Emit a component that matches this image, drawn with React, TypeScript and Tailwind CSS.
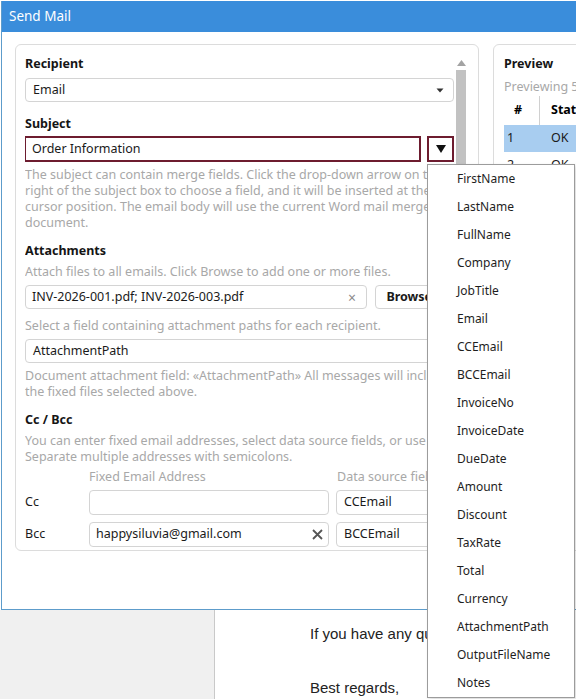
import * as React from 'react'

const fields = [
	'FirstName',
	'LastName',
	'FullName',
	'Company',
	'JobTitle',
	'Email',
	'CCEmail',
	'BCCEmail',
	'InvoiceNo',
	'InvoiceDate',
	'DueDate',
	'Amount',
	'Discount',
	'TaxRate',
	'Total',
	'Currency',
	'AttachmentPath',
	'OutputFileName',
	'Notes',
]

function Caret() {
	return (
		<svg width="8" height="5" viewBox="0 0 8 5" className="shrink-0">
			<path d="M0.5 0.5 L7.5 0.5 L4 4.5 Z" fill="#333" />
		</svg>
	)
}

function Label({ children }: { children: React.ReactNode }) {
	return (
		<div className="h-[18px] pt-[1px] text-[12.5px] leading-[18px] font-bold text-[#151515]">
			{children}
		</div>
	)
}

function Help({ children, className = '' }: { children: React.ReactNode; className?: string }) {
	return (
		<div className={`text-[12.5px] leading-[16px] text-[#a8a8a8] whitespace-nowrap ${className}`}>
			{children}
		</div>
	)
}

function Select({ value, className = '' }: { value: string; className?: string }) {
	return (
		<div
			className={`flex h-[24px] items-center justify-between rounded-[4px] border border-[#d4d4d4] bg-white pl-[7px] pr-[9px] text-[12.5px] text-[#1a1a1a] ${className}`}
		>
			<span>{value}</span>
			<Caret />
		</div>
	)
}

function RecipientPanel() {
	return (
		<div className="flex h-[507px] w-[464px] shrink-0 rounded-[6px] border border-[#dcdcdc] bg-white pl-[9px] pr-[11px] pt-[9px]">
			<div className="h-[493px] w-[430px] overflow-hidden">
				<Label>Recipient</Label>
				<Select value="Email" className="mt-[6px] w-[429px]" />

				<div className="mt-[12px]">
					<Label>Subject</Label>
				</div>
				<div className="mt-[4px] flex gap-[6px]">
					<div className="-ml-[1px] flex h-[26px] w-[397px] items-center border-2 border-[#6d1c2f] pl-[6px] pt-[1px] text-[12.5px] text-[#1a1a1a]">
						Order Information
					</div>
					<div className="flex h-[26px] w-[27px] items-center justify-center border-2 border-[#6d1c2f]">
						<svg width="10" height="8" viewBox="0 0 10 8">
							<path d="M0 0 L10 0 L5 8 Z" fill="#111" />
						</svg>
					</div>
				</div>
				<Help className="mt-[5px] -mb-[1px]">
					<div>The subject can contain merge fields. Click the drop-down arrow on the</div>
					<div>right of the subject box to choose a field, and it will be inserted at the</div>
					<div>cursor position. The email body will use the current Word mail merge</div>
					<div>document.</div>
				</Help>

				<div className="mt-[11px]">
					<Label>Attachments</Label>
				</div>
				<Help className="mt-[5px]">Attach files to all emails. Click Browse to add one or more files.</Help>
				<div className="mt-[5px] flex gap-[8px]">
					<div className="flex h-[24px] w-[342px] items-center justify-between rounded-[4px] border border-[#d4d4d4] pl-[6px] pr-[10px] text-[12.5px] text-[#1a1a1a]">
						<span>INV-2026-001.pdf; INV-2026-003.pdf</span>
						<span className="text-[14px] text-[#8a8a8a]">×</span>
					</div>
					<div className="flex h-[24px] w-[79px] items-center justify-center rounded-[4px] border border-[#d4d4d4] text-[12.5px] font-bold text-[#1a1a1a]">
						Browse...
					</div>
				</div>
				<Help className="mt-[9px]">Select a field containing attachment paths for each recipient.</Help>
				<Select value="AttachmentPath" className="mt-[5px] w-[429px]" />
				<Help className="mt-[5px] -mb-[1px]">
					<div>Document attachment field: «AttachmentPath» All messages will include</div>
					<div>the fixed files selected above.</div>
				</Help>

				<div className="mt-[11px]">
					<Label>Cc / Bcc</Label>
				</div>
				<Help className="mt-[5px] -mb-[1px]">
					<div>You can enter fixed email addresses, select data source fields, or use both.</div>
					<div>Separate multiple addresses with semicolons.</div>
				</Help>
				<div className="mt-[5px] grid grid-cols-[57px_240px_1fr] gap-x-[7px] text-[12.5px]">
					<div />
					<div className="leading-[16px] text-[#a8a8a8]">Fixed Email Address</div>
					<div className="whitespace-nowrap pl-[1px] leading-[16px] text-[#a8a8a8]">Data source field</div>
				</div>
				<div className="mt-[5px] grid grid-cols-[57px_240px_1fr] items-center gap-x-[7px] text-[12.5px] text-[#1a1a1a]">
					<div>Cc</div>
					<div className="h-[25px] rounded-[4px] border border-[#d4d4d4]" />
					<Select value="CCEmail" className="h-[25px]" />
				</div>
				<div className="mt-[7px] grid grid-cols-[57px_240px_1fr] items-center gap-x-[7px] text-[12.5px] text-[#1a1a1a]">
					<div>Bcc</div>
					<div className="flex h-[25px] items-center justify-between rounded-[4px] border border-[#d4d4d4] pl-[6px] pr-[5px]">
						<span>happysiluvia@gmail.com</span>
						<svg width="11" height="11" viewBox="0 0 11 11">
							<path d="M1 1 L10 10 M10 1 L1 10" stroke="#555" strokeWidth="1.8" />
						</svg>
					</div>
					<Select value="BCCEmail" className="h-[25px]" />
				</div>
			</div>
			<div className="ml-[1px] flex w-[10px] flex-col items-center pt-[6px]">
				<svg width="9" height="6" viewBox="0 0 9 6">
					<path d="M0 6 L4.5 0 L9 6 Z" fill="#a3a3a3" />
				</svg>
				<div className="mt-[4px] h-[470px] w-[10px] bg-[#c2c2c2]" />
			</div>
		</div>
	)
}

function PreviewPanel() {
	return (
		<div className="h-[507px] w-[300px] shrink-0 rounded-[6px] border border-[#dcdcdc] bg-white pl-[10px] pt-[9px]">
			<Label>Preview</Label>
			<div className="mt-[7px] whitespace-nowrap text-[12.5px] leading-[16px] text-[#a8a8a8]">
				Previewing 5 recipients
			</div>
			<div className="mt-[1px] flex h-[29px] items-center text-[12.5px]">
				<div className="flex h-full w-[36px] items-center border-r border-[#d0d0d0] pl-[10px] font-bold">#</div>
				<div className="whitespace-nowrap pl-[11px] font-bold">Status</div>
			</div>
			<div className="flex h-[27px] items-center bg-[#a8cdf0] text-[12.5px] text-[#1a1a1a]">
				<div className="w-[36px] pl-[3px]">1</div>
				<div className="pl-[11px]">OK</div>
			</div>
			<div className="flex h-[27px] items-center text-[12.5px] text-[#1a1a1a]">
				<div className="w-[36px] pl-[3px]">2</div>
				<div className="pl-[11px]">OK</div>
			</div>
		</div>
	)
}

export default function App() {
	return (
		<div className="relative h-[699px] w-[576px] overflow-hidden bg-white font-['Noto_Sans',sans-serif]">
			<div className="ml-[1px] mt-[1px] h-[609px] w-[640px] border-b border-l border-[#5d9ccb] bg-white">
				<div className="flex h-[31px] items-center bg-[#3a8ddb] pl-[7px] text-[13.5px] text-white">
					Send Mail
				</div>
				<div className="flex gap-[14px] pl-[13px] pt-[12px]">
					<RecipientPanel />
					<PreviewPanel />
				</div>
			</div>
			<div className="flex h-[89px]">
				<div className="w-[215px] shrink-0 border-r border-[#c9c9c9] bg-[#f0f0f0]" />
				<div className="min-w-0 flex-1 overflow-hidden whitespace-nowrap pl-[95px] pt-[13px] font-['Liberation_Sans',sans-serif] text-[15px] text-[#222]">
					<div className="leading-[22px]">If you have any questions, please let us know.</div>
					<div className="mt-[32px] leading-[22px]">Best regards,</div>
				</div>
			</div>

			<div className="absolute left-[427px] top-[164px] w-[148px] border border-[#9c9c9c] bg-white shadow-[2px_2px_4px_rgba(0,0,0,0.15)]">
				{fields.map((f) => (
					<div key={f} className="flex h-[28px] items-center pl-[29px] text-[12px] text-[#1e1e1e]">
						{f}
					</div>
				))}
			</div>
		</div>
	)
}
